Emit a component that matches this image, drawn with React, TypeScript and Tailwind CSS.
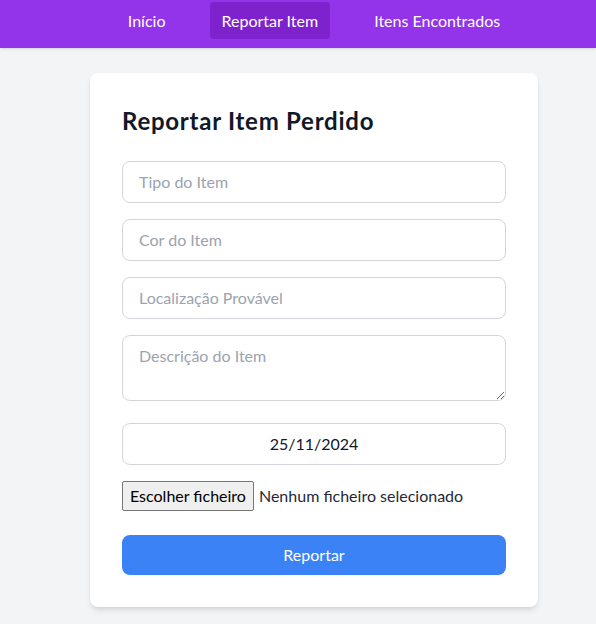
import React from "react";

export default function App() {
  return (
    <div className="min-h-[624px] bg-[#f3f4f6] font-['Lato',sans-serif]">
      <nav className="h-12 bg-[#9333ea] shadow pl-8">
        <ul className="flex justify-center gap-8 pt-[2px]">
          <li>
            <a className="flex h-[37px] items-center rounded px-3 text-base text-white">Início</a>
          </li>
          <li>
            <a className="flex h-[37px] items-center rounded bg-[#7e22ce] px-3 text-base text-white">Reportar Item</a>
          </li>
          <li>
            <a className="flex h-[37px] items-center rounded px-3 text-base text-white">Itens Encontrados</a>
          </li>
        </ul>
      </nav>
      <div className="pl-8 pt-[25px]">
        <div className="mx-auto max-w-md rounded-lg bg-white p-8 shadow-md">
          <h1 className="mb-6 text-2xl font-bold tracking-[0.75px] text-[#111827]">Reportar Item Perdido</h1>
          <form className="space-y-4">
            <input className="w-full rounded-lg border border-[#d1d5db] px-4 py-2 text-base text-[#111827] placeholder:text-[#9ca3af] outline-none" placeholder="Tipo do Item" />
            <input className="w-full rounded-lg border border-[#d1d5db] px-4 py-2 text-base text-[#111827] placeholder:text-[#9ca3af] outline-none" placeholder="Cor do Item" />
            <input className="w-full rounded-lg border border-[#d1d5db] px-4 py-2 text-base text-[#111827] placeholder:text-[#9ca3af] outline-none" placeholder="Localização Provável" />
            <textarea rows={2} className="w-full rounded-lg border border-[#d1d5db] px-4 py-2 text-base text-[#111827] placeholder:text-[#9ca3af] outline-none" placeholder="Descrição do Item" />
            <input readOnly value="25/11/2024" className="w-full rounded-lg border border-[#d1d5db] px-4 py-2 text-center text-base text-[#111827] outline-none" />
            <div className="flex h-[38px] items-start">
              <span className="flex h-[30px] items-center rounded-[2px] border border-[#767676] bg-[#efefef] px-[7px] text-base text-black">Escolher ficheiro</span>
              <span className="ml-[5px] flex h-[30px] items-center text-base text-[#1f2937]">Nenhum ficheiro selecionado</span>
            </div>
            <button type="button" className="w-full rounded-lg bg-[#3b82f6] py-2 text-base text-white">Reportar</button>
          </form>
        </div>
      </div>
    </div>
  );
}
